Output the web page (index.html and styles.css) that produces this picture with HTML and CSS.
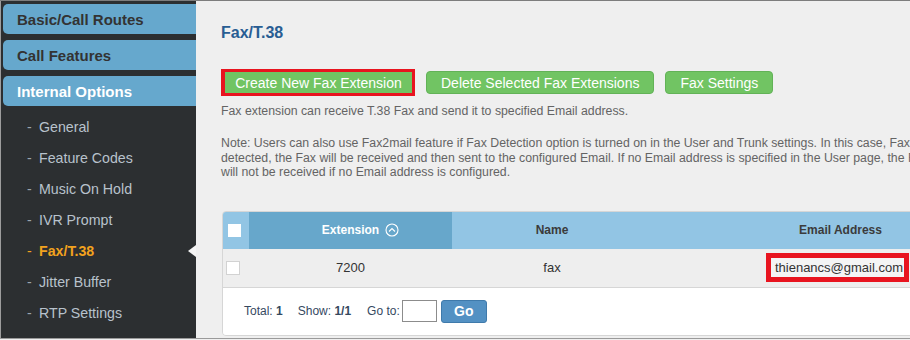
FILE: index.html
```html
<!DOCTYPE html>
<html lang="en">
	<head>
		<meta charset="utf-8">
		<title>Fax/T.38</title>
		<link rel="stylesheet" href="styles.css">
	</head>
	<body>
		<div class="page">
			<aside class="sidebar">
				<div class="tab">Basic/Call Routes</div>
				<div class="tab">Call Features</div>
				<div class="tab open">Internal Options</div>
				<ul class="submenu">
					<li>General</li>
					<li>Feature Codes</li>
					<li>Music On Hold</li>
					<li>IVR Prompt</li>
					<li class="current">Fax/T.38</li>
					<li>Jitter Buffer</li>
					<li>RTP Settings</li>
				</ul>
			</aside>
			<main class="content">
				<h1>Fax/T.38</h1>
				<div class="actions">
					<span class="marked"><button class="btn">Create New Fax Extension</button></span>
					<button class="btn">Delete Selected Fax Extensions</button>
					<button class="btn">Fax Settings</button>
				</div>
				<p class="desc">Fax extension can receive T.38 Fax and send it to specified Email address.</p>
				<p class="note">Note: Users can also use Fax2mail feature if Fax Detection option is turned on in the User and Trunk settings. In this case, Fax from either trunk or user extension will be<br>detected, the Fax will be received and then sent to the configured Email. If no Email address is specified in the User page, the Fax will be sent to the default Email address. Fax<br>will not be received if no Email address is configured.</p>

				<div class="table">
					<div class="row head">
						<div class="cell check"><span class="box"></span></div>
						<div class="cell ext sorted"><span class="label">Extension
							<svg class="sort" width="14" height="14" viewBox="0 0 14 14"><circle cx="7" cy="7" r="6" fill="none" stroke="#fff" stroke-width="1.1"/><path d="M4 8.5 L7 5.5 L10 8.5" fill="none" stroke="#fff" stroke-width="1.1"/></svg></span>
						</div>
						<div class="cell name">Name</div>
						<div class="cell email">Email Address</div>
					</div>
					<div class="row body">
						<div class="cell check"><span class="box"></span></div>
						<div class="cell ext">7200</div>
						<div class="cell name">fax</div>
						<div class="cell email"><span class="marked-text">thienancs@gmail.com</span></div>
					</div>
					<div class="pager">
						<span>Total: <b>1</b></span>
						<span>Show: <b>1/1</b></span>
						<span class="goto">Go to: <input type="text"></span>
						<button class="go">Go</button>
					</div>
				</div>
			</main>
		</div>
	</body>
</html>
```

FILE: styles.css
```css
* {
	box-sizing: border-box;
}
html,
body {
	margin: 0;
	padding: 0;
	width: 910px;
	height: 340px;
	overflow: hidden;
	background: #efefef;
	font-family: "Liberation Sans", Arial, sans-serif;
}
.page {
	display: flex;
	width: 910px;
	height: 339px;
	border-top: 1px solid #7d7d7d;
	border-bottom: 1px solid #9a9a9a;
}
.sidebar {
	width: 196px;
	flex-shrink: 0;
	background: #2c2f31;
	border-left: 1px solid #9d9d9d;
	padding: 3px 0 0 2px;
}
.tab {
	height: 30px;
	line-height: 31px;
	margin-bottom: 6px;
	padding-left: 14px;
	background: #66a8cd;
	border-radius: 5px 0 0 5px;
	color: #333;
	font-size: 15px;
	font-weight: bold;
}
.tab.open {
	color: #fff;
	margin-bottom: 0;
}
.submenu {
	list-style: none;
	margin: 6px 0 0;
	padding: 0;
}
.submenu li {
	position: relative;
	height: 31px;
	line-height: 31px;
	padding-left: 36px;
	color: #b8c2cc;
	font-size: 14.2px;
}
.submenu li::before {
	content: "-";
	position: absolute;
	left: 24px;
	color: #9aa4ad;
}
.submenu li.current {
	color: #f2a21e;
	font-weight: bold;
}
.submenu li.current::before {
	color: #f2a21e;
	font-weight: normal;
}
.submenu li.current::after {
	content: "";
	position: absolute;
	right: 0;
	top: 9px;
	border-style: solid;
	border-width: 6px 8px 6px 0;
	border-color: transparent #f4f4f4 transparent transparent;
}
.content {
	flex: 1;
	min-width: 0;
	overflow: hidden;
	padding: 22px 0 0 25px;
}
h1 {
	margin: 0;
	height: 20px;
	line-height: 20px;
	font-size: 16px;
	color: #285d93;
}
.actions {
	display: flex;
	align-items: center;
	gap: 11px;
	margin-top: 26px;
}
.btn {
	height: 23px;
	padding: 0 14px;
	border: 1px solid #62b257;
	border-radius: 4px;
	background: #71c463;
	color: #fff;
	font-family: "Liberation Sans", Arial, sans-serif;
	font-size: 14px;
	cursor: pointer;
}
.marked {
	display: flex;
	border-style: solid;
	border-color: #e8141f;
	border-width: 3px 3px 3px 4px;
}
.marked .btn {
	height: 21px;
	padding: 0;
	border: none;
	border-radius: 0;
	width: 187px;
}
.desc,
.note {
	margin: 0;
	color: #646464;
	font-size: 12.3px;
	white-space: nowrap;
}
.desc {
	margin-top: 8px;
	line-height: 14px;
}
.note {
	margin-top: 18px;
	line-height: 14.5px;
}
.table {
	margin-top: 31px;
	margin-left: 1px;
	width: 808px;
	border: 1px solid #d6d6d6;
	border-radius: 4px;
	overflow: hidden;
}
.row {
	display: grid;
	grid-template-columns: 26px 203px 200px 377px;
	height: 37px;
	align-items: stretch;
}
.cell {
	display: flex;
	align-items: center;
	justify-content: center;
	font-size: 12px;
	color: #333;
}
.head {
	background: #92c5e4;
}
.head .cell {
	font-weight: bold;
	color: #3b3b3b;
}
.head .cell.sorted {
	background: #67a7cb;
	color: #fff;
}
.label {
	position: relative;
}
.sort {
	position: absolute;
	left: 100%;
	top: 50%;
	margin: -7px 0 0 6px;
}
.cell.check {
	justify-content: flex-end;
}
.head .box {
	width: 13px;
	height: 13px;
	background: #fff;
	margin-right: 8px;
}
.body {
	background: #eeeeee;
	border-bottom: 1px solid #d6d6d6;
	height: 39px;
}
.body .cell {
	font-size: 13px;
}
.body .box {
	width: 14px;
	height: 14px;
	background: #fff;
	border: 1px solid #d2d2d2;
	margin-right: 9px;
}
.body .cell.email {
	padding-right: 6px;
}
.marked-text {
	border: 5px solid #e8141f;
	background: #f4f4f4;
	padding: 2px 1px 2px 4px;
	line-height: 15px;
	color: #333;
}
.pager {
	height: 47px;
	background: #fff;
	display: flex;
	align-items: center;
	gap: 15px;
	padding-left: 21px;
	font-size: 12px;
	color: #35495f;
}
.goto {
	display: flex;
	align-items: center;
	gap: 2px;
	margin-left: 1px;
}
.goto input {
	width: 35px;
	height: 22px;
	border: 1px solid #8c8c8c;
	margin: 0;
	padding: 0;
}
.go {
	margin-left: -11px;
	width: 46px;
	height: 23px;
	border: 1px solid #3f7aab;
	border-radius: 3px;
	background: #5391c3;
	color: #fff;
	font-family: "Liberation Sans", Arial, sans-serif;
	font-size: 14px;
	font-weight: bold;
}
```
